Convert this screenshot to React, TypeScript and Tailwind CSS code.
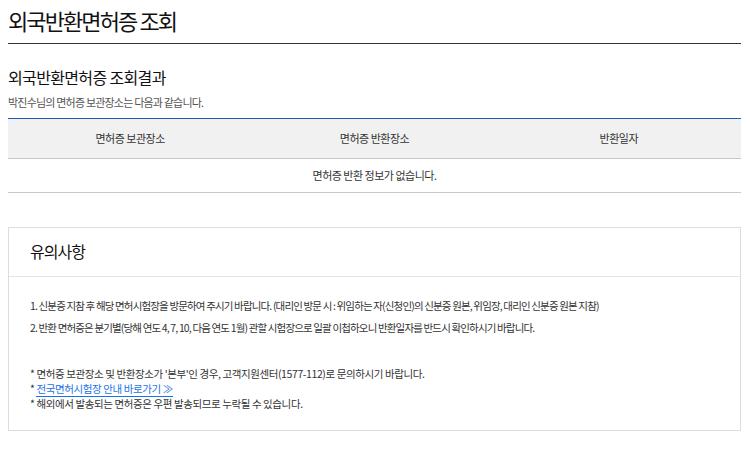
const columns = ['면허증 보관장소', '면허증 반환장소', '반환일자']

const notices = [
  '1. 신분증 지참 후 해당 면허시험장을 방문하여 주시기 바랍니다. (대리인 방문 시 : 위임하는 자(신청인)의 신분증 원본, 위임장, 대리인 신분증 원본 지참)',
  '2. 반환 면허증은 분기별(당해 연도 4, 7, 10, 다음 연도 1월) 관할 시험장으로 일괄 이첩하오니 반환일자를 반드시 확인하시기 바랍니다.'
]

export default function App() {
  return (
    <div className="min-h-[451px] w-[750px] bg-white font-['Noto_Sans_CJK_KR','Noto_Sans',sans-serif] text-[#222]">
      <div className="ml-2 w-[733px]">
        <h1 className="h-[44px] border-b border-[#333] pt-[5px] text-[22px] leading-[30px] tracking-[-1.9px] text-[#111]">
          외국반환면허증 조회
        </h1>

        <h2 className="mt-[22px] text-[16px] leading-[22px] tracking-[-0.65px] text-[#111]">
          외국반환면허증 조회결과
        </h2>
        <p className="mt-[6px] text-[11px] leading-[16px] tracking-[-0.8px] text-[#555]">
          박진수님의 면허증 보관장소는 다음과 같습니다.
        </p>

        <table className="mt-[8px] w-full table-fixed border-collapse border-t border-[#1a5fc0] text-[11px] tracking-[-0.5px] text-[#333]">
          <thead>
            <tr className="h-[40px] border-b border-[#c8c8c8] bg-[#f1f1f1]">
              {columns.map((col) => (
                <th key={col} className="text-center font-normal">
                  {col}
                </th>
              ))}
            </tr>
          </thead>
          <tbody>
            <tr className="h-[34px] border-b border-[#c8c8c8]">
              <td colSpan={3} className="text-center">
                면허증 반환 정보가 없습니다.
              </td>
            </tr>
          </tbody>
        </table>

        <section className="mt-[34px] h-[204px] border border-[#ddd]">
          <h3 className="h-[49px] border-b border-[#e5e5e5] pl-[21px] pt-[12px] text-[16px] leading-[22px] tracking-[-1px] text-[#111]">
            유의사항
          </h3>
          <div className="pl-[21px] pt-[21px] text-[10.5px] text-[#333]">
            <ul className="flex flex-col gap-[6px] tracking-[-0.85px]">
              {notices.map((n) => (
                <li key={n} className="leading-[16px]">
                  {n}
                </li>
              ))}
            </ul>
            <div className="mt-[30px] flex flex-col leading-[15px] tracking-[-0.4px]">
              <p>* 면허증 보관장소 및 반환장소가 '본부'인 경우, 고객지원센터(1577-112)로 문의하시기 바랍니다.</p>
              <p>
                *{' '}
                <a href="#" className="border-b border-[#1a73e8] text-[#1a73e8]">
                  전국면허시험장 안내 바로가기 ≫
                </a>
              </p>
              <p>* 해외에서 발송되는 면허증은 우편 발송되므로 누락될 수 있습니다.</p>
            </div>
          </div>
        </section>
      </div>
    </div>
  )
}
